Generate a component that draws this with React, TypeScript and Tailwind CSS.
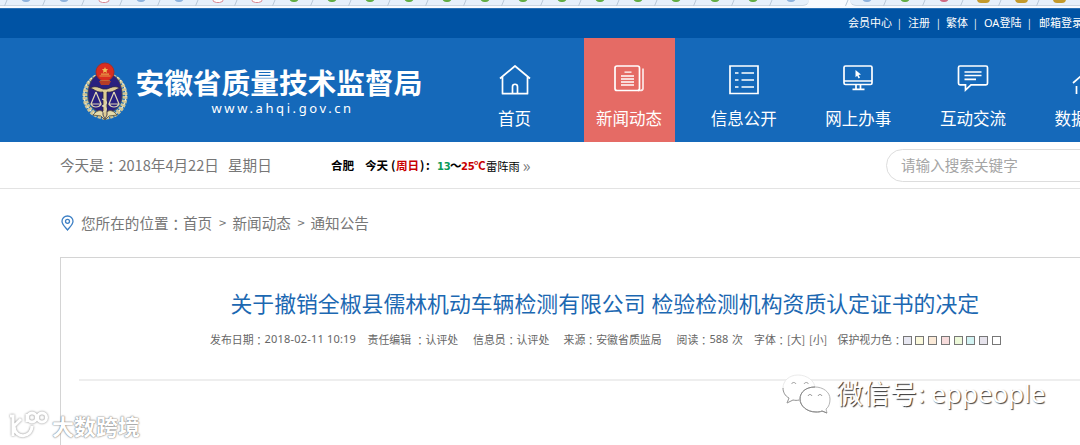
import type { ReactNode } from "react";
import clsx from "clsx";

const tabs = ["blue", "blue", "red", "blue", "blue", "red", "red", "green", "green", "green", "green", "green", "green", "green", "green", "green", "green", "green", "green", "green", "blue"];
const moreTabs = ["blue", "green", "pink", "gold", "gold", "gold"];

const tabColor: Record<string, string> = {
  blue: "bg-[#8fb3dd]",
  red: "border border-[#d98a94] bg-white",
  green: "bg-[#62ad45]",
  pink: "bg-[#cf6c86]",
  gold: "bg-[#c39a2c]",
};

const swatches = ["bg-[#e8e8f2]", "bg-[#fbf9dc]", "bg-[#fbead8]", "bg-[#f7dcdc]", "bg-[#edf9d9]", "bg-[#d2f3f3]", "bg-[#e6e3ec]", "bg-white"];

function Colon() {
  return <span className="relative top-[1px] font-['Noto_Sans_CJK_TC',sans-serif]">：</span>;
}

function Tab({ kind }: { kind: string }) {
  return (
    <div className="relative h-[6px] w-[38.25px] shrink-0">
      <svg className="absolute top-0 left-[2px] h-[6px] w-[6px]" viewBox="0 0 6 6">
        <path d="M5 0 2.5 6" stroke="#b9c8d8" fill="none" />
      </svg>
      <div
        className={clsx(
          "absolute left-[21px] h-[9px]",
          kind === "gold" ? "bottom-[3px] w-[13px] rounded-sm" : kind === "red" ? "bottom-[3px] w-[12px] rounded-full" : "bottom-[4.5px] w-[10px] rounded-full",
          tabColor[kind],
        )}
      />
    </div>
  );
}

function BrowserTabs() {
  return (
    <div className="flex h-[8px] overflow-hidden bg-[#f8fbff]">
      <div className="flex h-[6px] w-[809px] shrink-0 rounded-br-md border-b border-[#cbd7e3] bg-[#e6f0fb]">
        {tabs.map((kind, i) => (
          <Tab key={i} kind={kind} />
        ))}
      </div>
      <div className="ml-[41px] flex h-[6px] w-[230px] shrink-0 overflow-visible rounded-bl-md border-b border-[#cbd7e3] bg-[#e6f0fb] pl-[1px]">
        {moreTabs.map((kind, i) => (
          <div key={i} className="-ml-[10px] mr-[10px]">
            <Tab kind={kind} />
          </div>
        ))}
      </div>
    </div>
  );
}

function Emblem() {
  return (
    <svg className="h-[60px] w-[48px] shrink-0" viewBox="0 0 48 60">
      <ellipse cx="24" cy="35" rx="20" ry="21" fill="none" stroke="#cfc493" strokeWidth="5" strokeDasharray="3 1" />
      <ellipse cx="24" cy="34" rx="21" ry="21.5" fill="none" stroke="#f3edd0" strokeWidth="1.3" strokeDasharray="2 2" />
      <path d="M24 11C12 13 7 22 7 34c0 9 6 17 17 19 11-2 17-10 17-19C41 22 36 13 24 11Z" fill="#29217f" stroke="#4c4540" strokeWidth=".8" />
      <path d="M12 54c5-6 8-5 12-2 4-3 7-4 12 2l-8 1-4 4-4-4Z" fill="#e6dcab" stroke="#544a32" strokeWidth=".8" />
      <circle cx="24" cy="11" r="9" fill="#d92d20" stroke="#a92f25" />
      <path d="m24 6 .9 2 2.2.2-1.6 1.5.5 2.2-2-1.2-2 1.2.5-2.2-1.6-1.5 2.2-.2Z" fill="#efbd57" />
      <path d="M18.5 15h11M20 13.2h8M19 20h10" stroke="#e7a047" strokeWidth="1.2" />
      <path d="M18 20h12l-2 4h-8Z" fill="#b43d27" />
      <path d="M9 27c6-3 10 0 13 1h4c3-1 7-4 13-1-4 1-7 5-13 4v23l-2 4-2-4V31c-6 1-9-3-13-4Z" fill="#dccb94" stroke="#27223f" strokeWidth=".8" />
      <path d="m15 31-5 12h10l-5-12m18 0-5 12h10l-5-12M10 43c2 4 8 4 10 0m8 0c2 4 8 4 10 0M21 38c6 2 6 5 0 7 6 1 5 5 1 6" fill="none" stroke="#dfd6b5" strokeWidth="1.2" />
    </svg>
  );
}

const navItems: { label: string; active?: boolean; icon: ReactNode }[] = [
  {
    label: "首页",
    icon: <path d="M2 13.5 17 1l15 12.5M4.5 12v16.7h10v-7c0-3.3 5-3.3 5 0v7h10V12M14.5 28.7h5" strokeLinejoin="round" />,
  },
  {
    label: "新闻动态",
    active: true,
    icon: (
      <>
        <rect x="3" y="1" width="24.5" height="24.5" rx="2" />
        <path d="M31 3.5v20c0 1.5-1 2-3 2h-2" strokeOpacity=".85" />
        <path d="M12.5 7.2h7M9 11h13M9 14h13M9 17h13M9 20h13" strokeWidth="1.3" />
      </>
    ),
  },
  {
    label: "信息公开",
    icon: (
      <>
        <path d="M3 1h28v27.5H3z" />
        <path d="M8 8h3.5m3 0h12.5m-19 7h3.5m3 0h12.5m-19 7h3.5m3 0h12.5" />
      </>
    ),
  },
  {
    label: "网上办事",
    icon: (
      <>
        <rect x="3" y="1" width="28" height="18.5" rx="1.5" />
        <path d="M3 16h28M15 20v4m4.5-4v4M11.5 24.3h12" />
        <path d="m14.5 5 5.5 4.5-2.4.5 1.4 2.7-1.4.8-1.4-2.7-1.7 1.5Z" fill="white" stroke="none" />
      </>
    ),
  },
  {
    label: "互动交流",
    icon: (
      <>
        <path d="M4 1h26c1 0 1.5.5 1.5 1.5v15.8c0 1-.5 1.5-1.5 1.5H15L9.5 25v-5.2H4c-1 0-1.5-.5-1.5-1.5V2.5C2.5 1.5 3 1 4 1Z" />
        <path d="M8.5 7h17M8.5 10.5h17M8.5 14.3h11.5" />
      </>
    ),
  },
  {
    label: "数据查询",
    icon: <path d="m3 18 8.5-7.5 7 4L30 4M6.5 21v8m7-7v7m7-12v12m7-17v17" />,
  },
];

function Header() {
  return (
    <header className="text-white">
      <div className="flex h-[30px] items-center overflow-hidden border-t border-[#2b72b6] bg-[#0053a4] pb-[2px] pl-[848px] text-[11px] leading-none">
        <span className="w-[50px] shrink-0">会员中心</span>
        <span className="w-[10px] shrink-0 text-[10px]">|</span>
        <span className="w-[29px] shrink-0">注册</span>
        <span className="w-[9px] shrink-0 text-[10px]">|</span>
        <span className="w-[28px] shrink-0">繁体</span>
        <span className="w-[10px] shrink-0 text-[10px]">|</span>
        <span className="w-[44px] shrink-0 font-['Noto_Sans','Noto_Sans_CJK_SC',sans-serif]">OA登陆</span>
        <span className="w-[11px] shrink-0 text-[10px]">|</span>
        <span className="shrink-0">邮箱登录</span>
      </div>
      <div className="flex h-[104px] overflow-hidden bg-[#1569ba]">
        <div className="flex w-[469px] shrink-0 pt-[22.5px] pl-[81px]">
          <Emblem />
          <div className="ml-[6.5px] pt-[6px]">
            <h1 className="text-[28.7px] leading-[30px] font-bold whitespace-nowrap">安徽省质量技术监督局</h1>
            <p className="ml-[76px] pt-[2px] font-['Noto_Sans',sans-serif] text-[13px] leading-[18px] tracking-[2.6px]">www.ahqi.gov.cn</p>
          </div>
        </div>
        <nav className="flex gap-[23.6px]">
          {navItems.map((item) => (
            <a key={item.label} className={clsx("flex w-[91px] shrink-0 flex-col items-center pt-[27px]", item.active && "bg-[#e56b65]")}>
              <svg className="h-[32px] w-[34px]" viewBox="0 0 34 32" fill="none" stroke="white" strokeWidth="1.7">
                {item.icon}
              </svg>
              <span className="mt-[8px] text-[16.5px] leading-[26px] whitespace-nowrap">{item.label}</span>
            </a>
          ))}
        </nav>
      </div>
    </header>
  );
}

function InfoBar() {
  return (
    <div className="flex h-[47px] items-center overflow-hidden border-b border-[#e3e3e3] pl-[60px]">
      <div className="flex w-[271px] shrink-0 text-[14.6px] text-[#777] whitespace-pre">
        <span className="w-[168px]">今天是<Colon />2018年4月22日</span>
        <span>星期日</span>
      </div>
      <div className="flex w-[555px] shrink-0 items-center pt-[2px] text-[11.6px] font-bold text-black whitespace-nowrap">
        <span className="w-[34px]">合肥</span>
        <span className="w-[26px]">今天</span>
        <span className="w-[5px]">(</span>
        <span className="w-[24px] text-[#c80000]">周日</span>
        <span className="w-[5px]">)</span>
        <span className="w-[12px] pl-[1px]">:</span>
        <span className="w-[13px] font-['DejaVu_Sans',sans-serif] text-[10px] tracking-[-0.3px] text-[#0a9a58]">13</span>
        <span className="w-[11px]">～</span>
        <span className="w-[13px] font-['DejaVu_Sans',sans-serif] text-[10px] tracking-[-0.3px] text-[#c80000]">25</span>
        <span className="w-[12px] text-[#c80000]">℃</span>
        <span className="w-[36.5px] text-[11.2px] font-normal">雷阵雨</span>
        <span className="pb-[3px] text-[17px] leading-none font-normal text-[#777]">»</span>
      </div>
      <div className="flex h-[33px] w-[260px] shrink-0 items-center rounded-full border border-[#ddd] pl-[14px] text-[14.6px] text-[#a5a5a5]">请输入搜索关键字</div>
    </div>
  );
}

function Breadcrumb() {
  return (
    <div className="flex h-[68px] items-center pl-[61px] text-[14.6px] text-[#777] whitespace-nowrap">
      <svg className="mr-[7px] h-[16px] w-[13px]" viewBox="0 0 13 16" fill="none" stroke="#3e80c5" strokeWidth="1.3">
        <path d="M6.5 1C3.4 1 1 3.3 1 6.2c0 3.5 4.2 6.8 5.5 8.8 1.3-2 5.5-5.3 5.5-8.8C12 3.3 9.6 1 6.5 1Z" />
        <circle cx="6.5" cy="6.3" r="2" />
      </svg>
      <span className="w-[102px]">您所在的位置<Colon /></span>
      <span className="w-[36px]">首页</span>
      <span className="w-[13.5px] text-[13px]">&gt;</span>
      <span className="w-[65px]">新闻动态</span>
      <span className="w-[13px] text-[13px]">&gt;</span>
      <span>通知公告</span>
    </div>
  );
}

function Article() {
  return (
    <article className="ml-[60px] h-[188px] w-[1040px] border-t border-l border-[#d4d4d4]">
      <h2 className="flex pt-[30px] pl-[169.5px] text-[21.85px] leading-[30px] text-[#1c68b2] whitespace-nowrap">
        <span className="w-[421px]">关于撤销全椒县儒林机动车辆检测有限公司</span>
        <span>检验检测机构资质认定证书的决定</span>
      </h2>
      <div className="mt-[11px] flex h-[20px] items-center pl-[149px] text-[10.9px] text-[#666] whitespace-nowrap">
        <span className="w-[54.5px]">发布日期<Colon /></span>
        <span className="w-[103px] font-['Noto_Sans',sans-serif] text-[11px] tracking-[0.2px]">2018-02-11 10:19</span>
        <span className="w-[47px]">责任编辑</span>
        <span className="w-[11px]"><Colon /></span>
        <span className="w-[47.5px]">认评处</span>
        <span className="w-[90.5px]">信息员<Colon />认评处</span>
        <span className="w-[113px]">来源<Colon />安徽省质监局</span>
        <span className="w-[33px]">阅读<Colon /></span>
        <span className="w-[22.5px] font-['Noto_Sans',sans-serif] text-[11px]">588</span>
        <span className="w-[22px]">次</span>
        <span className="w-[33px]">字体<Colon /></span>
        <span className="w-[22px]">[大]</span>
        <span className="w-[28.5px]">[小]</span>
        <span className="w-[65px]">保护视力色<Colon /></span>
        <div className="flex gap-[3.8px] pt-[3px]">
          {swatches.map((color) => (
            <span key={color} className={clsx("h-[9px] w-[9px] border border-[#777]", color)} />
          ))}
        </div>
      </div>
      <hr className="mt-[30px] ml-[18px] border-t-2 border-[#eee]" />
    </article>
  );
}

function WechatMark() {
  return (
    <div className="absolute top-[371px] left-[780px] flex items-center text-white">
      <svg className="h-[44px] w-[52px]" viewBox="0 0 52 44" fill="white">
        <path d="M18 4C9 4 3 10 3 17c0 4 2 8 6 10l-2 5 6-3c9 2 22-2 22-12C35 10 27 4 18 4Z" stroke="#e4e4e4" strokeWidth=".8" />
        <path d="M3 17c0 4 2 8 6 10l-2 5 6-3c2 .5 4 .5 6 0" fill="none" stroke="#999" />
        <path d="M11.5 13c1-2 3.5-2 4.5 0m8 0c1-2 3.500-2 4.500 0" fill="none" stroke="#999" />
        <path d="M35 16c-9 0-15 5-15 12s7 13 16 13c2 0 4 0 6-1l5 2-1-4c3-2 4-6 4-10 0-7-7-12-15-12Z" stroke="#b5b5b5" />
        <path d="M35 16c-9 0-15 5-15 12s7 13 16 13c2 0 4 0 6-1l5 2" fill="none" stroke="#888" />
        <path d="M28 25c1-2 3-2 4 0m6 0c1-2 3-2 4 0" fill="none" stroke="#888" />
      </svg>
      <span className="ml-[4px] w-[82px] text-[27px] leading-[40px] whitespace-nowrap [text-shadow:1px_1px_1px_#333]">微信号</span>
      <span className="w-[13px] font-['Noto_Sans',sans-serif] text-[26px] leading-[40px] [text-shadow:1px_1px_1px_#444]">:</span>
      <span className="font-['Noto_Sans',sans-serif] text-[26px] leading-[40px] [text-shadow:1px_1px_1px_#444]">eppeople</span>
    </div>
  );
}

function CornerMark() {
  return (
    <div className="absolute top-[408px] left-[8px] flex items-center text-white">
      <svg className="h-[32px] w-[44px] drop-shadow-[0_0_1px_#888]" viewBox="0 0 44 32" fill="none" stroke="white" strokeWidth="3">
        <path d="M2 7h3v20M13 10l-7 7c1 14 18 12 18 0M19 5v8" />
        <circle cx="24" cy="8.5" r="4.5" />
        <circle cx="34" cy="8.5" r="4.5" />
      </svg>
      <span className="text-[22px] leading-[34px] font-bold [text-shadow:0_0_2px_#777,0_0_1px_#888]">大数跨境</span>
    </div>
  );
}

export default function App() {
  return (
    <div className="relative h-[445px] w-[1080px] overflow-hidden bg-white font-['Noto_Sans_CJK_SC',sans-serif]">
      <BrowserTabs />
      <Header />
      <InfoBar />
      <Breadcrumb />
      <Article />
      <WechatMark />
      <CornerMark />
    </div>
  );
}
